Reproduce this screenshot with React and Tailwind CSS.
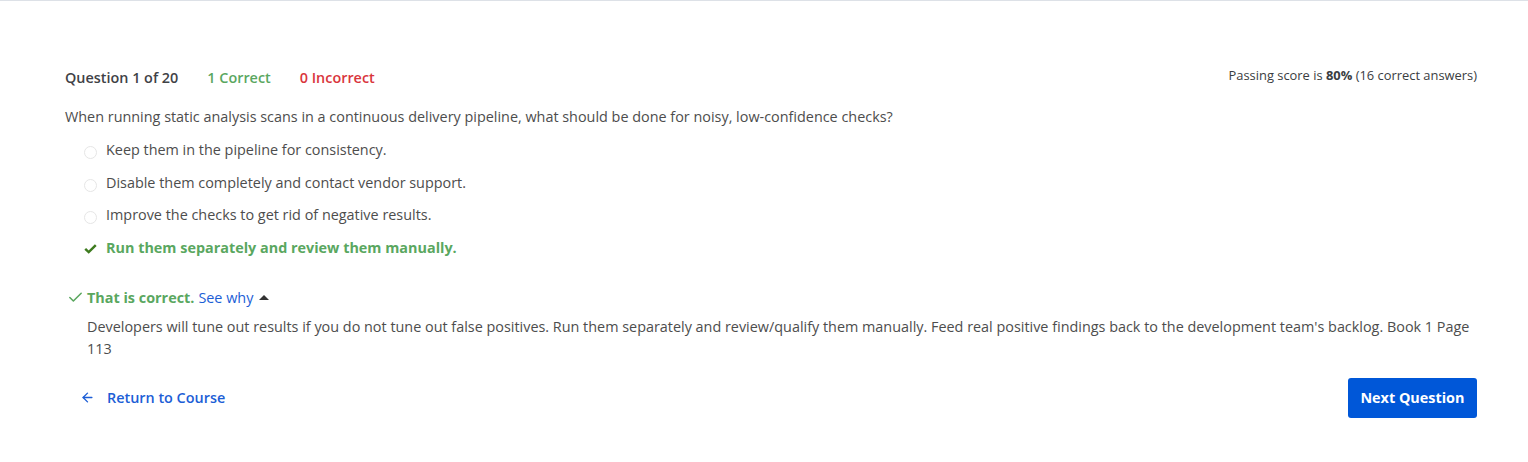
import { ArrowLeft, Check } from "lucide-react";

const options = [
  "Keep them in the pipeline for consistency.",
  "Disable them completely and contact vendor support.",
  "Improve the checks to get rid of negative results.",
];

export default function App() {
  return (
    <div
      className="w-[1528px] h-[462px] bg-white border-t border-[#dde1e7] text-[#4d4d4d]"
      style={{ fontFamily: '"Open Sans", sans-serif' }}
    >
      <div className="pl-[65px] pr-[51px] pt-[66px]">
        <div className="flex items-center justify-between h-[22px]">
          <div className="flex items-center text-[14.4px] font-semibold">
            <span className="text-[#3f4246]">Question 1 of 20</span>
            <span className="ml-[29px] text-[#5aa75f]">1 Correct</span>
            <span className="ml-[29px] text-[#d9353c]">0 Incorrect</span>
          </div>
          <div className="text-[12.9px] text-[#3a3d42] -mt-[4px]">
            Passing score is <span className="font-bold">80%</span> (16 correct answers)
          </div>
        </div>

        <p className="mt-[17px] text-[14.4px] leading-[22px]">
          When running static analysis scans in a continuous delivery pipeline, what should be done for noisy,
          low-confidence checks?
        </p>

        <ul className="mt-[6px] pl-[19px]">
          {options.map((o) => (
            <li key={o} className="flex items-center h-[32.4px] text-[14.4px]">
              <span className="w-[13px] h-[13px] rounded-full border border-[#e6e6e6] mt-[5px]" />
              <span className="ml-[9px]">{o}</span>
            </li>
          ))}
          <li className="flex items-center h-[32.4px] text-[14.4px] font-bold text-[#5aa75f]">
            <svg className="w-[13px] h-[13px] mt-[3px]" viewBox="0 0 16 16">
              <path d="M1.5 8.5 L5.8 12.5 L14.5 3.8" fill="none" stroke="#3e7b1f" strokeWidth="3" />
            </svg>
            <span className="ml-[9px]">Run them separately and review them manually.</span>
          </li>
        </ul>

        <div className="mt-[24px] flex items-center h-[20px] text-[14.4px]">
          <Check className="w-[17px] h-[17px] text-[#5aa75f] ml-[2px]" strokeWidth={2.2} />
          <span className="ml-[3px] font-bold text-[#5aa75f]">That is correct.</span>
          <span className="ml-[4px] text-[#1c5ed6]">See why</span>
          <span className="ml-[6px] w-0 h-0 border-l-[5px] border-r-[5px] border-b-[5px] border-l-transparent border-r-transparent border-b-[#333]" />
        </div>

        <p className="mt-[8px] ml-[22px] text-[14.4px] leading-[22px]">
          Developers will tune out results if you do not tune out false positives. Run them separately and
          review/qualify them manually. Feed real positive findings back to the development team's backlog. Book 1
          Page 113
        </p>

        <div className="mt-[18px] flex items-center justify-between">
          <button className="flex items-center ml-[15px] text-[14.4px] font-semibold text-[#1c5ed6]">
            <ArrowLeft className="w-[15px] h-[15px]" strokeWidth={2.2} />
            <span className="ml-[12px]">Return to Course</span>
          </button>
          <button className="h-[40px] px-[12.5px] rounded-[3px] bg-[#0057d8] text-white text-[14.4px] font-bold">
            Next Question
          </button>
        </div>
      </div>
    </div>
  );
}
